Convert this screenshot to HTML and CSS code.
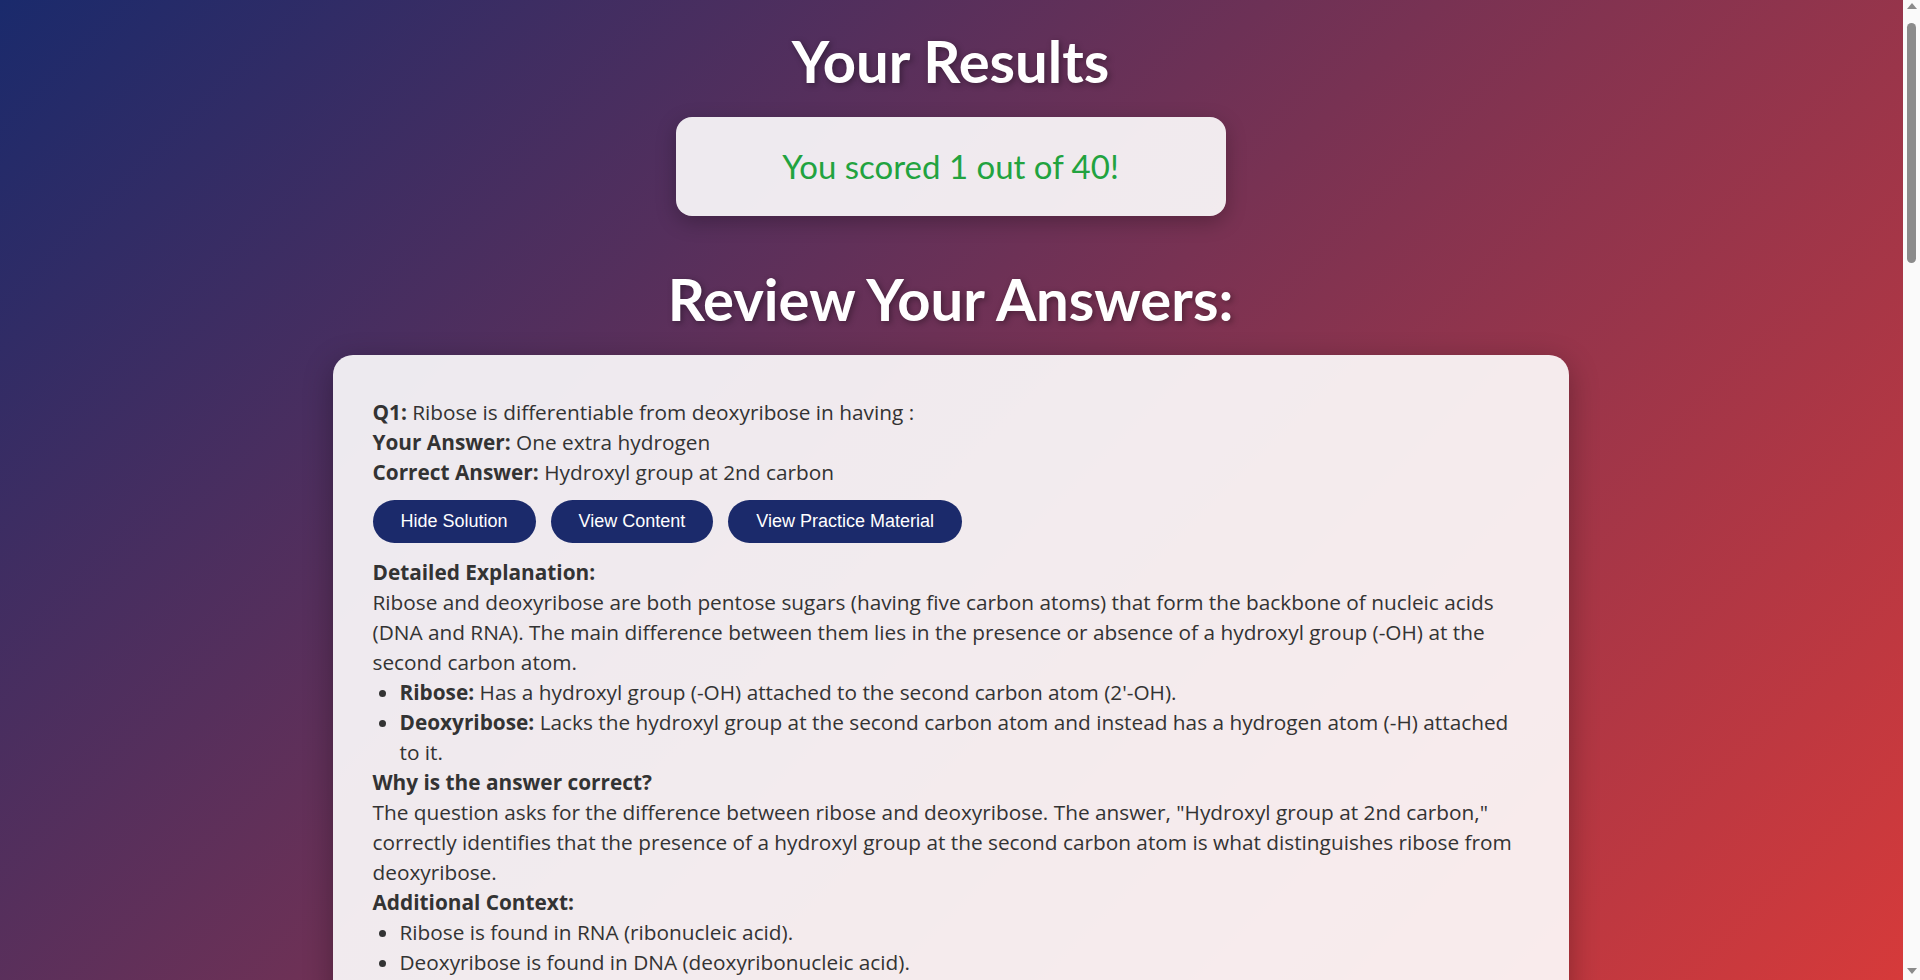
FILE: index.html
```html
<!DOCTYPE html>
<html lang="en">
<head>
<meta charset="UTF-8">
<title>Quiz Results</title>
<link rel="stylesheet" href="styles.css">
</head>
<body>
<div class="viewport">
<main class="page">
  <h1 class="title">Your Results</h1>
  <div class="score-box">
    <p class="score">You scored 1 out of 40!</p>
  </div>
  <h2 class="review-title">Review Your Answers:</h2>
  <section class="review-card">
    <div class="question">
      <p class="line"><strong>Q1:</strong> Ribose is differentiable from deoxyribose in having :</p>
      <p class="line"><strong>Your Answer:</strong> One extra hydrogen</p>
      <p class="line"><strong>Correct Answer:</strong> Hydroxyl group at 2nd carbon</p>
      <div class="actions">
        <button class="btn">Hide Solution</button>
        <button class="btn">View Content</button>
        <button class="btn">View Practice Material</button>
      </div>
      <div class="solution">
        <p class="line"><strong>Detailed Explanation:</strong></p>
        <p class="line">Ribose and deoxyribose are both pentose sugars (having five carbon atoms) that form the backbone of nucleic acids (DNA and RNA). The main difference between them lies in the presence or absence of a hydroxyl group (-OH) at the second carbon atom.</p>
        <ul class="list">
          <li><strong>Ribose:</strong> Has a hydroxyl group (-OH) attached to the second carbon atom (2'-OH).</li>
          <li><strong>Deoxyribose:</strong> Lacks the hydroxyl group at the second carbon atom and instead has a hydrogen atom (-H) attached to it.</li>
        </ul>
        <p class="line"><strong>Why is the answer correct?</strong></p>
        <p class="line">The question asks for the difference between ribose and deoxyribose. The answer, "Hydroxyl group at 2nd carbon," correctly identifies that the presence of a hydroxyl group at the second carbon atom is what distinguishes ribose from deoxyribose.</p>
        <p class="line"><strong>Additional Context:</strong></p>
        <ul class="list">
          <li>Ribose is found in RNA (ribonucleic acid).</li>
          <li>Deoxyribose is found in DNA (deoxyribonucleic acid).</li>
          <li>The absence of the 2'-OH group makes DNA more chemically stable than RNA.</li>
        </ul>
      </div>
    </div>
    <div class="question">
      <p class="line"><strong>Q2:</strong> Which of the following is a purine base?</p>
      <p class="line"><strong>Your Answer:</strong> Cytosine</p>
      <p class="line"><strong>Correct Answer:</strong> Adenine</p>
      <div class="actions"><button class="btn">View Solution</button><button class="btn">View Content</button><button class="btn">View Practice Material</button></div>
    </div>
    <div class="question">
      <p class="line"><strong>Q3:</strong> The bond between two nucleotides in a nucleic acid chain is :</p>
      <p class="line"><strong>Your Answer:</strong> Glycosidic bond</p>
      <p class="line"><strong>Correct Answer:</strong> Phosphodiester bond</p>
      <div class="actions"><button class="btn">View Solution</button><button class="btn">View Content</button><button class="btn">View Practice Material</button></div>
    </div>
    <div class="question">
      <p class="line"><strong>Q4:</strong> Which enzyme is responsible for unwinding the DNA double helix?</p>
      <p class="line"><strong>Your Answer:</strong> DNA ligase</p>
      <p class="line"><strong>Correct Answer:</strong> Helicase</p>
      <div class="actions"><button class="btn">View Solution</button><button class="btn">View Content</button><button class="btn">View Practice Material</button></div>
    </div>
    <div class="question">
      <p class="line"><strong>Q5:</strong> The number of hydrogen bonds between guanine and cytosine is :</p>
      <p class="line"><strong>Your Answer:</strong> Two</p>
      <p class="line"><strong>Correct Answer:</strong> Three</p>
      <div class="actions"><button class="btn">View Solution</button><button class="btn">View Content</button><button class="btn">View Practice Material</button></div>
    </div>
    <div class="question">
      <p class="line"><strong>Q6:</strong> Thymine is replaced by which base in RNA?</p>
      <p class="line"><strong>Your Answer:</strong> Cytosine</p>
      <p class="line"><strong>Correct Answer:</strong> Uracil</p>
      <div class="actions"><button class="btn">View Solution</button><button class="btn">View Content</button><button class="btn">View Practice Material</button></div>
    </div>
    <div class="question">
      <p class="line"><strong>Q7:</strong> A nucleoside is made up of :</p>
      <p class="line"><strong>Your Answer:</strong> Base, sugar and phosphate</p>
      <p class="line"><strong>Correct Answer:</strong> Base and sugar</p>
      <div class="actions"><button class="btn">View Solution</button><button class="btn">View Content</button><button class="btn">View Practice Material</button></div>
    </div>
    <div class="question">
      <p class="line"><strong>Q8:</strong> The two strands of DNA run in which direction?</p>
      <p class="line"><strong>Your Answer:</strong> Parallel</p>
      <p class="line"><strong>Correct Answer:</strong> Antiparallel</p>
      <div class="actions"><button class="btn">View Solution</button><button class="btn">View Content</button><button class="btn">View Practice Material</button></div>
    </div>
    <div class="question">
      <p class="line"><strong>Q9:</strong> Which RNA carries amino acids to the ribosome?</p>
      <p class="line"><strong>Your Answer:</strong> mRNA</p>
      <p class="line"><strong>Correct Answer:</strong> tRNA</p>
      <div class="actions"><button class="btn">View Solution</button><button class="btn">View Content</button><button class="btn">View Practice Material</button></div>
    </div>
    <div class="question">
      <p class="line"><strong>Q10:</strong> The double helix model of DNA was proposed by :</p>
      <p class="line"><strong>Your Answer:</strong> Meselson and Stahl</p>
      <p class="line"><strong>Correct Answer:</strong> Watson and Crick</p>
      <div class="actions"><button class="btn">View Solution</button><button class="btn">View Content</button><button class="btn">View Practice Material</button></div>
    </div>
    <div class="question">
      <p class="line"><strong>Q11:</strong> Chargaff's rule states that :</p>
      <p class="line"><strong>Your Answer:</strong> A + T = G + C</p>
      <p class="line"><strong>Correct Answer:</strong> A = T and G = C</p>
      <div class="actions"><button class="btn">View Solution</button><button class="btn">View Content</button><button class="btn">View Practice Material</button></div>
    </div>
    <div class="question">
      <p class="line"><strong>Q12:</strong> The sugar present in a nucleotide of DNA is a :</p>
      <p class="line"><strong>Your Answer:</strong> Hexose</p>
      <p class="line"><strong>Correct Answer:</strong> Pentose</p>
      <div class="actions"><button class="btn">View Solution</button><button class="btn">View Content</button><button class="btn">View Practice Material</button></div>
    </div>
    <div class="question">
      <p class="line"><strong>Q13:</strong> Which of the following is a pyrimidine?</p>
      <p class="line"><strong>Your Answer:</strong> Guanine</p>
      <p class="line"><strong>Correct Answer:</strong> Thymine</p>
      <div class="actions"><button class="btn">View Solution</button><button class="btn">View Content</button><button class="btn">View Practice Material</button></div>
    </div>
    <div class="question">
      <p class="line"><strong>Q14:</strong> The distance between two consecutive base pairs in B-DNA is :</p>
      <p class="line"><strong>Your Answer:</strong> 3.4 nm</p>
      <p class="line"><strong>Correct Answer:</strong> 0.34 nm</p>
      <div class="actions"><button class="btn">View Solution</button><button class="btn">View Content</button><button class="btn">View Practice Material</button></div>
    </div>
  </section>
</main>
</div>
<div class="scrollbar" aria-hidden="true">
  <span class="arrow arrow-up"></span>
  <span class="thumb"></span>
  <span class="track-rest"></span>
  <span class="arrow arrow-down"></span>
</div>
</body>
</html>
```
FILE: styles.css
```css
html, body {
  margin: 0;
  padding: 0;
  height: 100%;
  overflow: hidden;
}

body {
  display: flex;
  font-family: "Open Sans", "Segoe UI", sans-serif;
  color: #333;
}

.viewport {
  flex: 1 1 auto;
  height: 100vh;
  overflow-y: auto;
  background: linear-gradient(135deg, #1a2a6c 0%, #d63a3a 100%);
}

.scrollbar {
  flex: 0 0 17px;
  height: 100vh;
  display: flex;
  flex-direction: column;
  align-items: center;
  background: #fafafa;
}

.arrow {
  width: 0;
  height: 0;
  border-left: 5px solid transparent;
  border-right: 5px solid transparent;
}

.arrow-up {
  margin-top: 3px;
  border-bottom: 6px solid #8b8b8b;
}

.arrow-down {
  margin-bottom: 6px;
  border-top: 6px solid #8b8b8b;
}

.thumb {
  width: 9px;
  height: 240px;
  margin-top: 14px;
  border-radius: 5px;
  background: #8b8b8b;
}

.track-rest {
  flex: 1 1 auto;
}

.page {
  display: flex;
  flex-direction: column;
  align-items: center;
  padding: 26px 2px 60px 0;
}

.title {
  margin: 0;
  color: #fff;
  font-family: Lato, "Open Sans", sans-serif;
  font-size: 58px;
  font-weight: 700;
  line-height: 1.2;
  text-shadow: 2px 2px 6px rgba(0, 0, 0, 0.35);
}

.score-box {
  width: 550px;
  box-sizing: border-box;
  margin-top: 21px;
  padding: 30px 20px;
  border-radius: 16px;
  background: rgba(255, 255, 255, 0.9);
  box-shadow: 0 6px 20px rgba(0, 0, 0, 0.25);
  text-align: center;
}

.score {
  margin: 0;
  color: #22a33f;
  font-family: Lato, "Open Sans", sans-serif;
  font-size: 33px;
  line-height: 39px;
}

.review-title {
  margin: 48px 0 22px;
  color: #fff;
  font-family: Lato, "Open Sans", sans-serif;
  font-size: 58px;
  font-weight: 700;
  line-height: 1.2;
  text-shadow: 2px 2px 6px rgba(0, 0, 0, 0.35);
}

.review-card {
  width: 1236px;
  box-sizing: border-box;
  padding: 42px 40px 40px;
  border-radius: 20px;
  background: rgba(255, 255, 255, 0.9);
  box-shadow: 0 8px 30px rgba(0, 0, 0, 0.3);
  font-size: 20.8px;
  line-height: 30px;
}

.question + .question {
  margin-top: 40px;
}

.line {
  margin: 0;
}

.actions {
  display: flex;
  gap: 15px;
  margin: 13px 0 14px;
}

.btn {
  font-family: "Liberation Sans", Arial, sans-serif;
  font-size: 18px;
  line-height: 21px;
  padding: 11px 28px;
  border: none;
  border-radius: 25px;
  background: #1b2a6b;
  color: #fff;
  cursor: pointer;
}

.list {
  margin: 0;
  padding-left: 27px;
}
```
